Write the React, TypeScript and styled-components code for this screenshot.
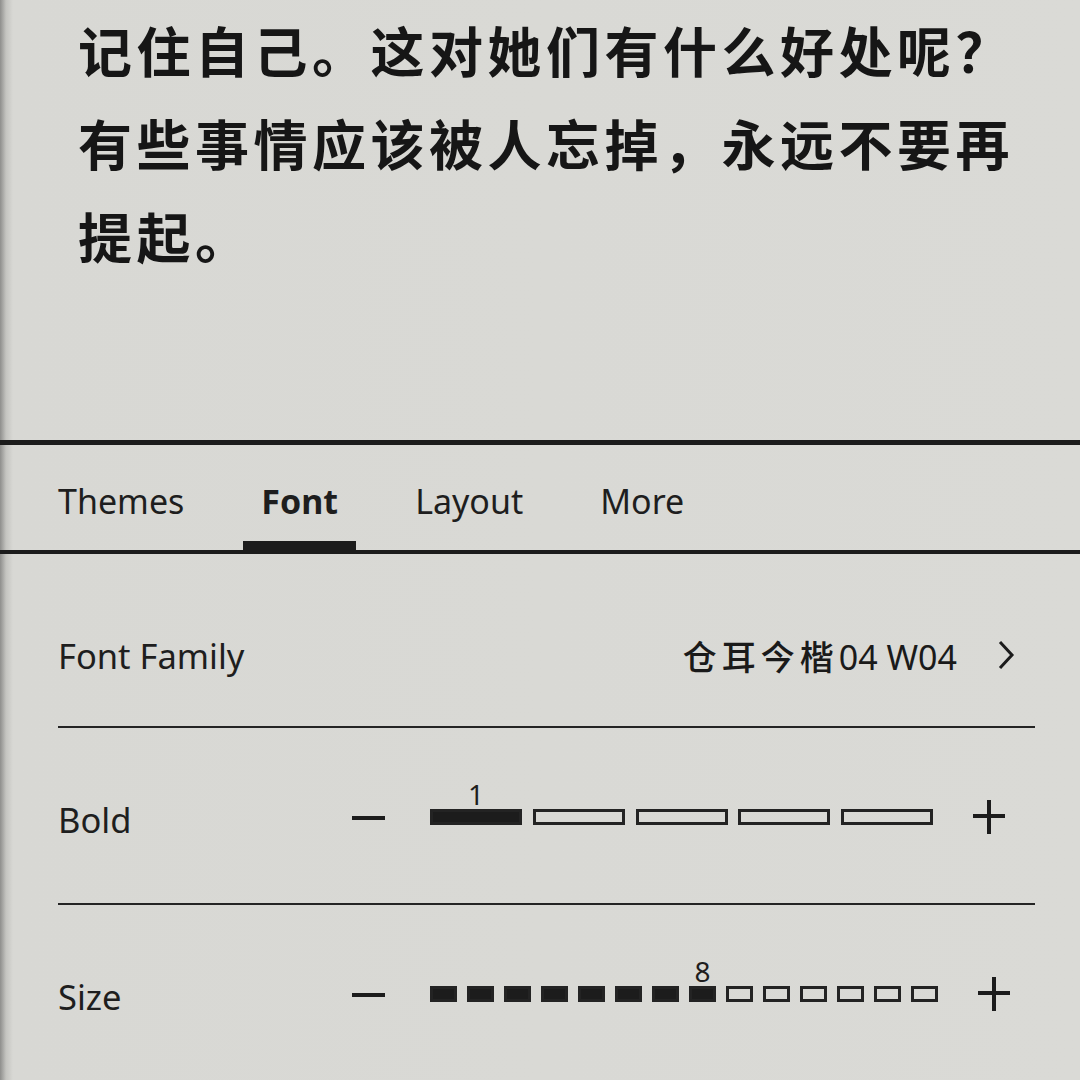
import React from "react";
import styled, { createGlobalStyle } from "styled-components";

const GlobalStyle = createGlobalStyle`
  html, body {
    margin: 0;
    padding: 0;
  }
  body {
    width: 1080px;
    height: 1080px;
    overflow: hidden;
    background: linear-gradient(to right, #8e8e8c 0px, #c4c4c0 6px, #d8d8d4 13px, #dadad6 100%);
    color: #1b1b1b;
    font-family: "Noto Sans", "Open Sans", "Noto Sans CJK SC", sans-serif;
  }
`;

const Screen = styled.div`
  width: 1080px;
  height: 1080px;
  display: flex;
  flex-direction: column;
`;

const Reading = styled.div`
  height: 444px;
  box-sizing: border-box;
  padding: 3px 0 0 78px;
`;

const Paragraph = styled.p`
  margin: 0;
  width: 950px;
  font-family: "Noto Sans CJK SC", "Noto Sans CJK TC", sans-serif;
  font-weight: 700;
  font-size: 54px;
  letter-spacing: 4.5px;
  line-height: 93px;
  color: #161616;
`;

const Rule = styled.div<{ $h: number }>`
  height: ${(p) => p.$h}px;
  background: #1c1c1c;
  flex: none;
`;

const TabBar = styled.nav`
  height: 105px;
  display: flex;
  align-items: stretch;
  gap: 41px;
  padding-left: 40px;
  flex: none;
`;

const Tab = styled.div<{ $active?: boolean }>`
  position: relative;
  display: flex;
  align-items: center;
  padding: 6px 18px 0;
  font-size: 34px;
  font-weight: ${(p) => (p.$active ? 700 : 400)};
  color: #1e1e1e;
  &::after {
    content: "";
    display: ${(p) => (p.$active ? "block" : "none")};
    position: absolute;
    left: 0;
    right: 0;
    bottom: 0;
    height: 9px;
    background: #1c1c1c;
  }
`;

const Settings = styled.div`
  padding: 30px 45px 0 58px;
  display: flex;
  flex-direction: column;
`;

const Row = styled.div<{ $h: number; $pt?: number }>`
  height: ${(p) => p.$h}px;
  box-sizing: border-box;
  padding-top: ${(p) => p.$pt ?? 0}px;
  display: flex;
  align-items: center;
`;

const Label = styled.div`
  flex: 0 0 294px;
  font-size: 34.5px;
  color: #1e1e1e;
`;

const Divider = styled.div`
  height: 2px;
  background: #242424;
`;

const Value = styled.div`
  margin-left: auto;
  margin-right: 20px;
  display: flex;
  align-items: center;
  gap: 40px;
`;

const ValueText = styled.span`
  font-size: 34px;
  color: #1a1a1a;
  font-family: "Noto Sans", "Noto Sans CJK SC", sans-serif;
`;

const Cjk = styled.span`
  font-family: "Noto Sans CJK SC", sans-serif;
  font-weight: 500;
  letter-spacing: 5px;
`;

const Stepper = styled.div`
  display: flex;
  align-items: center;
  margin-bottom: 5px;
`;

const Minus = styled.span`
  width: 33px;
  height: 4px;
  background: #1c1c1c;
  margin-right: 45px;
  margin-top: 2px;
`;

const Track = styled.div<{ $w: number }>`
  width: ${(p) => p.$w}px;
  display: flex;
  justify-content: space-between;
`;

const Cell = styled.div<{ $w: number; $on: boolean }>`
  position: relative;
  width: ${(p) => p.$w}px;
  height: 16px;
  box-sizing: border-box;
  border: 3px solid #232323;
  background: ${(p) => (p.$on ? "#1c1c1c" : "transparent")};
  flex: none;
`;

const CellNum = styled.span`
  position: absolute;
  left: 50%;
  bottom: 100%;
  transform: translateX(-50%);
  margin-bottom: 2px;
  font-size: 28px;
  line-height: 32px;
  color: #1e1e1e;
`;

const PlusIcon = () => (
  <svg width="32" height="34" viewBox="0 0 32 34" style={{ marginLeft: 40 }}>
    <line x1="0" y1="16" x2="32" y2="16" stroke="#1c1c1c" strokeWidth="4" />
    <line x1="16" y1="0" x2="16" y2="34" stroke="#1c1c1c" strokeWidth="4" />
  </svg>
);

const Chevron = () => (
  <svg width="18" height="30" viewBox="0 0 18 30">
    <polyline
      points="3,2 15,15 3,28"
      fill="none"
      stroke="#1c1c1c"
      strokeWidth="3"
      strokeLinejoin="miter"
    />
  </svg>
);

type StepProps = { count: number; value: number; cellW: number; trackW: number };

const Slider = ({ count, value, cellW, trackW }: StepProps) => (
  <Stepper>
    <Minus />
    <Track $w={trackW}>
      {Array.from({ length: count }, (_, i) => (
        <Cell key={i} $w={cellW} $on={i < value}>
          {i === value - 1 && <CellNum>{value}</CellNum>}
        </Cell>
      ))}
    </Track>
    <PlusIcon />
  </Stepper>
);

export default function App() {
  return (
    <>
      <GlobalStyle />
      <Screen>
        <Reading>
          <Paragraph>
            记住自己。这对她们有什么好处呢？有些事情应该被人忘掉，永远不要再提起。
          </Paragraph>
        </Reading>
        <Rule $h={5} />
        <TabBar>
          <Tab>Themes</Tab>
          <Tab $active>Font</Tab>
          <Tab>Layout</Tab>
          <Tab>More</Tab>
        </TabBar>
        <Rule $h={4} />
        <Settings>
          <Row $h={142}>
            <Label>Font Family</Label>
            <Value>
              <ValueText>
                <Cjk>仓耳今楷</Cjk>04 W04
              </ValueText>
              <Chevron />
            </Value>
          </Row>
          <Divider />
          <Row $h={175} $pt={8}>
            <Label>Bold</Label>
            <Slider count={5} value={1} cellW={92} trackW={503} />
          </Row>
          <Divider />
          <Row $h={175} $pt={8}>
            <Label>Size</Label>
            <Slider count={14} value={8} cellW={27} trackW={508} />
          </Row>
        </Settings>
      </Screen>
    </>
  );
}
